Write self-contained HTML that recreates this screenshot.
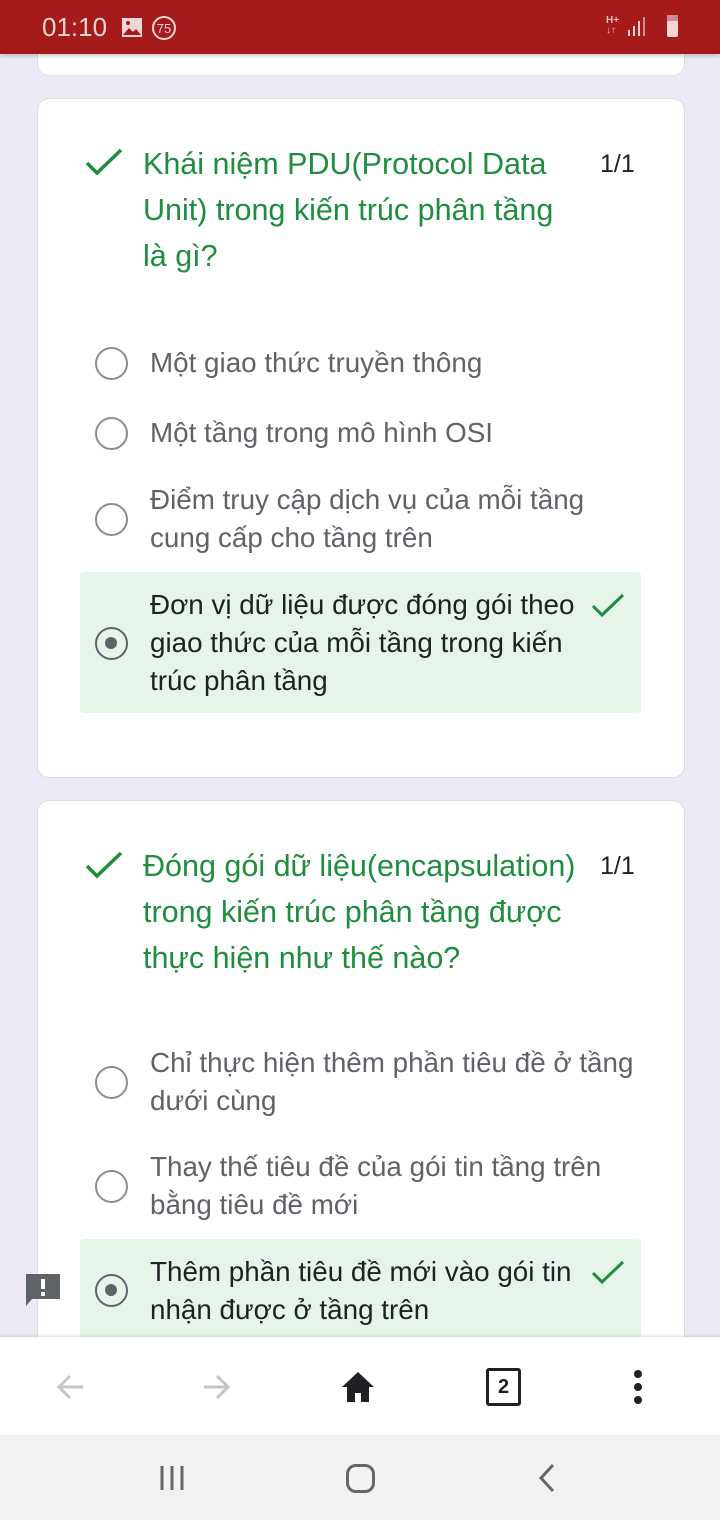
<!DOCTYPE html><html><head><meta charset="utf-8"><style>
*{margin:0;padding:0;box-sizing:border-box}
body{width:720px;height:1520px;overflow:hidden;background:#edeaf6;font-family:"Liberation Sans",sans-serif;position:relative}
.abs{position:absolute}
.card{position:absolute;left:37px;width:648px;background:#fff;border:1px solid #dadce0;border-radius:12px}
.title{position:absolute;left:143px;width:470px;color:#1e8e3e;font-size:30.5px;line-height:46px;white-space:nowrap}
.score{position:absolute;left:600px;font-size:25px;color:#202124}
.opt{position:absolute;left:150px;width:470px;font-size:27.8px;line-height:38px;color:#5f6368;white-space:nowrap}
.radio{position:absolute;left:95px;width:33px;height:33px;border:2.5px solid #8a8d91;border-radius:50%}
.sel{position:absolute;left:80px;width:561px;background:#e6f4ea;border-radius:4px}
.sel .radio{border-color:#5f6368;left:15px}
.dot{position:absolute;left:8px;top:8px;width:12px;height:12px;border-radius:50%;background:#5f6368}
</style></head><body>
<div class="card" style="top:20px;height:56px;"></div>
<div class="abs" style="left:0;top:0;width:720px;height:54px;background:#a51a1a;box-shadow:0 2px 4px rgba(0,0,0,.2)"></div>
<div class="abs" style="left:42px;top:12px;color:#f1d6d6;font-size:26px">01:10</div>
<svg class="abs" style="left:121px;top:17px" width="22" height="22"><rect x="1" y="1" width="20" height="19" fill="#f1d6d6"/><path d="M2 18 L8 11 L12 15 L15 12 L20 18Z" fill="#a51a1a"/><circle cx="7" cy="6" r="2" fill="#a51a1a"/></svg>
<svg class="abs" style="left:150px;top:14px" width="28" height="28"><circle cx="14" cy="14" r="11" fill="none" stroke="#f1d6d6" stroke-width="2"/><text x="14" y="19" font-size="13" fill="#f1d6d6" text-anchor="middle" font-family="Liberation Sans">75</text></svg>
<div class="abs" style="left:606px;top:16px;color:#e8bcbc;font-size:10px;font-weight:bold;line-height:10px">H+<br>↓↑</div>
<svg class="abs" style="left:626px;top:16px" width="24" height="22"><rect x="2" y="14" width="2" height="6" fill="#f1d6d6"/><rect x="7" y="10" width="2" height="10" fill="#f1d6d6"/><rect x="12" y="5" width="2" height="15" fill="#f1d6d6"/><rect x="17" y="1" width="2" height="19" fill="#c98b8b"/></svg>
<div class="abs" style="left:667px;top:15px;width:11px;height:22px;background:#f1d6d6;border-radius:2px"></div>
<div class="abs" style="left:667px;top:15px;width:11px;height:6px;background:#c98b8b"></div>

<div class="card" style="top:98px;height:680px"></div>
<svg class="abs" style="left:84px;top:148px" width="40" height="30"><path d="M3 15 L13 25 L37 2" fill="none" stroke="#1e8e3e" stroke-width="3.5"/></svg>
<div class="title" style="top:141px">Khái niệm PDU(Protocol Data<br>Unit) trong kiến trúc phân tầng<br>là gì?</div>
<div class="score" style="top:150px">1/1</div>
<div class="radio" style="top:347px"></div><div class="opt" style="top:344px">Một giao thức truyền thông</div>
<div class="radio" style="top:417px"></div><div class="opt" style="top:414px">Một tầng trong mô hình OSI</div>
<div class="radio" style="top:503px"></div><div class="opt" style="top:481px">Điểm truy cập dịch vụ của mỗi tầng<br>cung cấp cho tầng trên</div>
<div class="sel" style="top:572px;height:141px"><div class="radio" style="top:55px"><div class="dot"></div></div>
<div class="opt" style="left:70px;top:14px;width:420px;color:#202124">Đơn vị dữ liệu được đóng gói theo<br>giao thức của mỗi tầng trong kiến<br>trúc phân tầng</div>
<svg class="abs" style="left:510px;top:20px" width="36" height="28"><path d="M3 14 L12 23 L33 3" fill="none" stroke="#1e8e3e" stroke-width="3"/></svg></div>

<div class="card" style="top:800px;height:640px"></div>
<svg class="abs" style="left:84px;top:851px" width="40" height="30"><path d="M3 15 L13 25 L37 2" fill="none" stroke="#1e8e3e" stroke-width="3.5"/></svg>
<div class="title" style="top:843px">Đóng gói dữ liệu(encapsulation)<br>trong kiến trúc phân tầng được<br>thực hiện như thế nào?</div>
<div class="score" style="top:852px">1/1</div>
<div class="radio" style="top:1066px"></div><div class="opt" style="top:1044px">Chỉ thực hiện thêm phần tiêu đề ở tầng<br>dưới cùng</div>
<div class="radio" style="top:1170px"></div><div class="opt" style="top:1148px">Thay thế tiêu đề của gói tin tầng trên<br>bằng tiêu đề mới</div>
<div class="sel" style="top:1239px;height:120px"><div class="radio" style="top:35px"><div class="dot"></div></div>
<div class="opt" style="left:70px;top:14px;width:420px;color:#202124">Thêm phần tiêu đề mới vào gói tin<br>nhận được ở tầng trên</div>
<svg class="abs" style="left:510px;top:20px" width="36" height="28"><path d="M3 14 L12 23 L33 3" fill="none" stroke="#1e8e3e" stroke-width="3"/></svg></div>
<svg class="abs" style="left:24px;top:1272px" width="38" height="36"><path d="M2 2 H36 V27 H8 L2 34Z" fill="#5f6368"/><rect x="17" y="7" width="4" height="10" fill="#fff"/><rect x="17" y="20" width="4" height="4" fill="#fff"/></svg>

<div class="abs" style="left:0;top:1337px;width:720px;height:98px;background:#fff;box-shadow:0 -1px 3px rgba(0,0,0,.15)"></div>
<svg class="abs" style="left:55px;top:1372px" width="32" height="30"><path d="M28 15 H4 M15 4 L4 15 L15 26" fill="none" stroke="#c4c4c4" stroke-width="3"/></svg>
<svg class="abs" style="left:201px;top:1372px" width="32" height="30"><path d="M3 15 H27 M16 4 L27 15 L16 26" fill="none" stroke="#c4c4c4" stroke-width="3"/></svg>
<svg class="abs" style="left:340px;top:1370px" width="36" height="34"><path d="M18 2 L34 17 H29 V32 H21 V23 H15 V32 H7 V17 H2Z" fill="#202124"/></svg>
<div class="abs" style="left:486px;top:1368px;width:35px;height:38px;border:3px solid #202124;border-radius:3px;text-align:center;font-size:20px;font-weight:bold;line-height:32px;color:#202124">2</div>
<svg class="abs" style="left:630px;top:1368px" width="16" height="40"><circle cx="8" cy="6" r="4" fill="#202124"/><circle cx="8" cy="19" r="4" fill="#202124"/><circle cx="8" cy="32" r="4" fill="#202124"/></svg>
<div class="abs" style="left:0;top:1435px;width:720px;height:85px;background:#f2f2f2"></div>
<svg class="abs" style="left:158px;top:1462px" width="30" height="30"><path d="M4 4V28 M14 4V28 M24 4V28" stroke="#666" stroke-width="3"/></svg>
<div class="abs" style="left:346px;top:1464px;width:29px;height:29px;border:3px solid #666;border-radius:10px"></div>
<svg class="abs" style="left:535px;top:1462px" width="24" height="32"><path d="M18 3 L6 16 L18 29" fill="none" stroke="#666" stroke-width="3"/></svg>
</body></html>
